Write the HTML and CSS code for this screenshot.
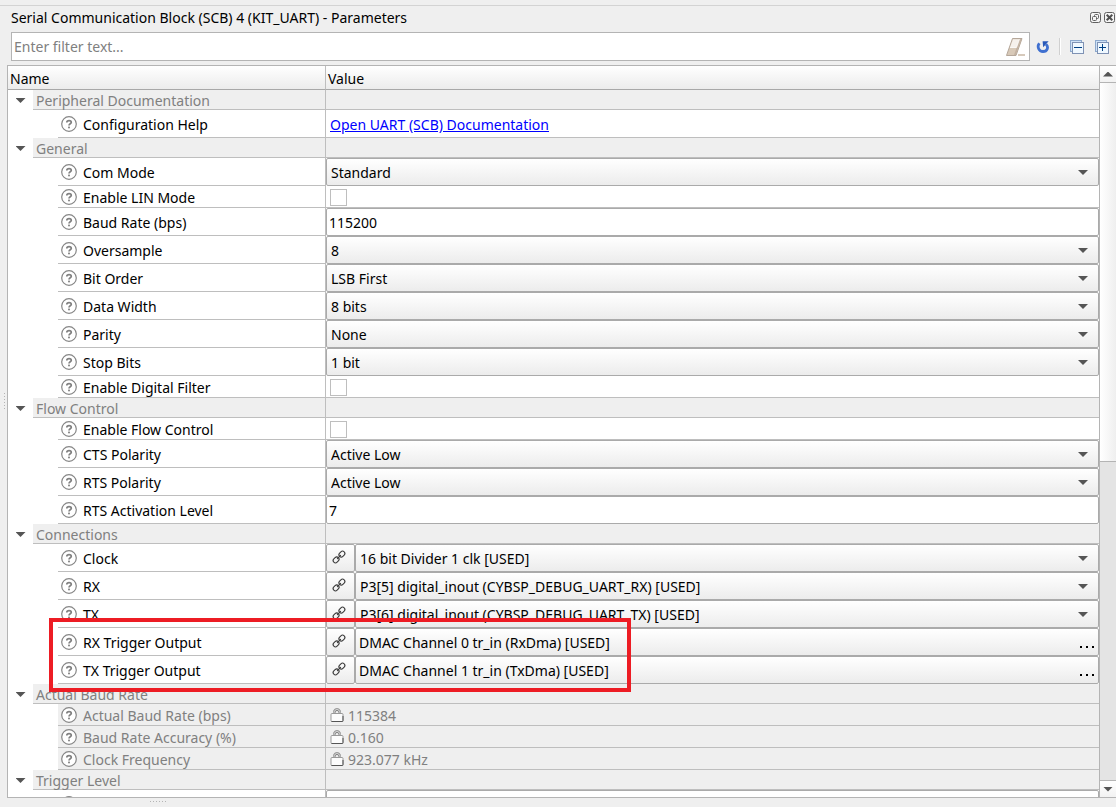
FILE: index.html
```
<!DOCTYPE html>
<html lang="en">
<head>
<meta charset="utf-8">
<title>Serial Communication Block (SCB) 4 (KIT_UART) - Parameters</title>
<link rel="stylesheet" href="styles.css">
</head>
<body>
<svg class="sprite" aria-hidden="true">
  <symbol id="i-help" viewBox="0 0 16 16"><circle cx="8" cy="8" r="7.3" fill="#fff" stroke="#868686" stroke-width="1.2"/><path d="M5.8 6.4C5.8 4 10.4 4 10.3 6.4C10.2 7.8 8 7.8 8 9.6" fill="none" stroke="#808080" stroke-width="1.7"/><rect x="7.1" y="10.6" width="1.8" height="1.7" fill="#808080"/></symbol>
  <symbol id="i-link" viewBox="0 0 14 14"><g fill="none" stroke="#3a3a3a" stroke-width="1.1" stroke-linecap="round"><rect x="-3.2" y="-2.3" width="6.4" height="4.6" rx="2.3" transform="translate(9.9 4.1) rotate(-45)"/><rect x="-3.2" y="-2.3" width="6.4" height="4.6" rx="2.3" transform="translate(4.1 9.9) rotate(-45)"/><path d="M5.4 8.6L8.6 5.4"/></g></symbol>
  <symbol id="i-lock" viewBox="0 0 14 14"><path d="M3.5 6V4Q3.5 .6 7 .6T10.5 4V6" fill="none" stroke="#b0b0b0"/><path d="M5 6V4Q5 2.5 7 2.5T9 4V6" fill="none" stroke="#777"/><path d="M3.5 3.5Q4 .6 7 .6T10.5 3.5" fill="none" stroke="#999"/><rect x="1" y="5.5" width="12" height="8" rx="1" fill="#fcfcfc" stroke="#999"/><path d="M1.5 13.5H12.5Q13 13.5 13 12.5V8" fill="none" stroke="#555"/></symbol>
</svg>

<header class="title-bar">
  <h1 class="title">Serial Communication Block (SCB) 4 (KIT_UART) - Parameters</h1>
  <button class="dock-button" aria-label="Float panel"><svg viewBox="0 0 11 11" width="11" height="11"><rect x=".5" y=".5" width="10" height="10" rx="2" fill="#f4f4f4" stroke="#606060"/><rect x="4.5" y="2.5" width="4" height="4" rx="1" fill="none" stroke="#606060"/><rect x="2.5" y="4.5" width="4" height="4" rx="1" fill="#f4f4f4" stroke="#606060"/></svg></button>
  <button class="dock-button" aria-label="Close panel"><svg viewBox="0 0 11 11" width="11" height="11"><rect x=".5" y=".5" width="10" height="10" rx="2" fill="#f4f4f4" stroke="#606060"/><path d="M2.7 2.7L8.3 8.3M8.3 2.7L2.7 8.3" stroke="#505050" stroke-width="2"/></svg></button>
</header>

<div class="toolbar">
  <div class="filter">
    <input class="filter-input" type="text" placeholder="Enter filter text..." aria-label="Filter">
    <button class="tool" aria-label="Clear filter"><svg viewBox="0 0 20 20" width="20" height="20"><path d="M7.5 1.5H17L11 18.5H1.5Z" fill="#d8c9b8" stroke="#b5a79a"/><path d="M8 2.2H14.5L11.5 10.5H5Z" fill="#f6f1ec"/><path d="M14.5 2.2H16.4L10.8 18H9Z" fill="#c3b2a2"/><path d="M5 10.5H11.5L14.5 2.2" fill="none" stroke="#fff" stroke-width=".8"/><path d="M13 18H20" stroke="#c4b29e" stroke-width="1.4"/></svg></button>
  </div>
  <button class="tool" aria-label="Reset"><svg viewBox="0 0 14 14" width="14" height="14"><path d="M3.3 3.2C.8 6.8 2.8 11.5 7 11.5C11.4 11.5 12.9 7 10 4.2" fill="none" stroke="#3f70d0" stroke-width="2.8"/><path d="M6.6 1.2H12.6L7.2 7.2Z" fill="#2858b8"/></svg></button>
  <span class="separator"></span>
  <button class="tool" aria-label="Collapse all"><svg viewBox="0 0 14 14" width="14" height="14"><rect x=".5" y=".5" width="11" height="11" fill="#cfe2f6" stroke="#8da9cd"/><rect x="2.5" y="2.5" width="11" height="11" fill="#eff8ff" stroke="#7f92b4"/><path d="M4 7.5H12" stroke="#004084"/></svg></button>
  <button class="tool" aria-label="Expand all"><svg viewBox="0 0 14 14" width="14" height="14"><rect x=".5" y=".5" width="11" height="11" fill="#cfe2f6" stroke="#8da9cd"/><rect x="2.5" y="2.5" width="11" height="11" fill="#eff8ff" stroke="#7f92b4"/><path d="M4 7.5H11M7.5 4V11" stroke="#004084"/></svg></button>
</div>

<main class="workspace">
  <div class="grip grip-side"></div>
  <div class="panel">
    <div class="tree">
      <table class="grid">
        <colgroup><col class="col-name"><col></colgroup>
        <thead><tr><th>Name</th><th>Value</th></tr></thead>
        <tbody>
          <tr class="group"><td><div class="branch"><button class="toggle" aria-label="Toggle Peripheral Documentation"></button><span class="name">Peripheral Documentation</span></div></td><td></td></tr>
          <tr class="tall"><td><div class="item"><svg class="help"><use href="#i-help"/></svg><span>Configuration Help</span></div></td><td class="lined"><a class="doc" href="#docs">Open UART (SCB) Documentation</a></td></tr>

          <tr class="group"><td><div class="branch"><button class="toggle" aria-label="Toggle General"></button><span class="name">General</span></div></td><td></td></tr>
          <tr class="tall"><td><div class="item"><svg class="help"><use href="#i-help"/></svg><label for="com">Com Mode</label></div></td><td><div class="field drop"><select id="com"><option>Standard</option></select></div></td></tr>
          <tr class="short"><td><div class="item"><svg class="help"><use href="#i-help"/></svg><label for="lin">Enable LIN Mode</label></div></td><td class="lined"><input id="lin" class="check" type="checkbox"></td></tr>
          <tr class="tall"><td><div class="item"><svg class="help"><use href="#i-help"/></svg><label for="baud">Baud Rate (bps)</label></div></td><td><div class="field"><input id="baud" class="text" type="text" value="115200"></div></td></tr>
          <tr class="tall"><td><div class="item"><svg class="help"><use href="#i-help"/></svg><label for="over">Oversample</label></div></td><td><div class="field drop"><select id="over"><option>8</option></select></div></td></tr>
          <tr class="tall"><td><div class="item"><svg class="help"><use href="#i-help"/></svg><label for="order">Bit Order</label></div></td><td><div class="field drop"><select id="order"><option>LSB First</option></select></div></td></tr>
          <tr class="tall"><td><div class="item"><svg class="help"><use href="#i-help"/></svg><label for="width">Data Width</label></div></td><td><div class="field drop"><select id="width"><option>8 bits</option></select></div></td></tr>
          <tr class="tall"><td><div class="item"><svg class="help"><use href="#i-help"/></svg><label for="parity">Parity</label></div></td><td><div class="field drop"><select id="parity"><option>None</option></select></div></td></tr>
          <tr class="tall"><td><div class="item"><svg class="help"><use href="#i-help"/></svg><label for="stop">Stop Bits</label></div></td><td><div class="field drop"><select id="stop"><option>1 bit</option></select></div></td></tr>
          <tr class="short"><td><div class="item"><svg class="help"><use href="#i-help"/></svg><label for="digital">Enable Digital Filter</label></div></td><td class="lined"><input id="digital" class="check" type="checkbox"></td></tr>

          <tr class="group"><td><div class="branch"><button class="toggle" aria-label="Toggle Flow Control"></button><span class="name">Flow Control</span></div></td><td></td></tr>
          <tr class="short"><td><div class="item"><svg class="help"><use href="#i-help"/></svg><label for="flow">Enable Flow Control</label></div></td><td class="lined"><input id="flow" class="check" type="checkbox"></td></tr>
          <tr class="tall"><td><div class="item"><svg class="help"><use href="#i-help"/></svg><label for="cts">CTS Polarity</label></div></td><td><div class="field drop"><select id="cts"><option>Active Low</option></select></div></td></tr>
          <tr class="tall"><td><div class="item"><svg class="help"><use href="#i-help"/></svg><label for="rts">RTS Polarity</label></div></td><td><div class="field drop"><select id="rts"><option>Active Low</option></select></div></td></tr>
          <tr class="tall"><td><div class="item"><svg class="help"><use href="#i-help"/></svg><label for="level">RTS Activation Level</label></div></td><td><div class="field"><input id="level" class="text" type="text" value="7"></div></td></tr>

          <tr class="group"><td><div class="branch"><button class="toggle" aria-label="Toggle Connections"></button><span class="name">Connections</span></div></td><td></td></tr>
          <tr class="tall"><td><div class="item"><svg class="help"><use href="#i-help"/></svg><label for="clock">Clock</label></div></td><td><div class="linked"><button class="jump" aria-label="Go to Clock"><svg class="chain"><use href="#i-link"/></svg></button><div class="field drop"><select id="clock"><option>16 bit Divider 1 clk [USED]</option></select></div></div></td></tr>
          <tr class="tall"><td><div class="item"><svg class="help"><use href="#i-help"/></svg><label for="rx">RX</label></div></td><td><div class="linked"><button class="jump" aria-label="Go to RX"><svg class="chain"><use href="#i-link"/></svg></button><div class="field drop"><select id="rx"><option>P3[5] digital_inout (CYBSP_DEBUG_UART_RX) [USED]</option></select></div></div></td></tr>
          <tr class="tall"><td><div class="item"><svg class="help"><use href="#i-help"/></svg><label for="tx">TX</label></div></td><td><div class="linked"><button class="jump" aria-label="Go to TX"><svg class="chain"><use href="#i-link"/></svg></button><div class="field drop"><select id="tx"><option>P3[6] digital_inout (CYBSP_DEBUG_UART_TX) [USED]</option></select></div></div></td></tr>
          <tr class="tall"><td><div class="item"><svg class="help"><use href="#i-help"/></svg><label for="rxt">RX Trigger Output</label></div></td><td><div class="linked"><button class="jump" aria-label="Go to RX Trigger Output"><svg class="chain"><use href="#i-link"/></svg></button><button id="rxt" class="picker"><span>DMAC Channel 0 tr_in (RxDma) [USED]</span><span class="dots"><i></i><i></i><i></i></span></button></div></td></tr>
          <tr class="tall"><td><div class="item"><svg class="help"><use href="#i-help"/></svg><label for="txt">TX Trigger Output</label></div></td><td><div class="linked"><button class="jump" aria-label="Go to TX Trigger Output"><svg class="chain"><use href="#i-link"/></svg></button><button id="txt" class="picker"><span>DMAC Channel 1 tr_in (TxDma) [USED]</span><span class="dots"><i></i><i></i><i></i></span></button></div></td></tr>

          <tr class="group"><td><div class="branch"><button class="toggle" aria-label="Toggle Actual Baud Rate"></button><span class="name">Actual Baud Rate</span></div></td><td></td></tr>
          <tr class="short readonly"><td><div class="item"><svg class="help"><use href="#i-help"/></svg><span>Actual Baud Rate (bps)</span></div></td><td class="lined"><div class="locked"><svg class="lock"><use href="#i-lock"/></svg><span>115384</span></div></td></tr>
          <tr class="short readonly"><td><div class="item"><svg class="help"><use href="#i-help"/></svg><span>Baud Rate Accuracy (%)</span></div></td><td class="lined"><div class="locked"><svg class="lock"><use href="#i-lock"/></svg><span>0.160</span></div></td></tr>
          <tr class="short readonly"><td><div class="item"><svg class="help"><use href="#i-help"/></svg><span>Clock Frequency</span></div></td><td class="lined"><div class="locked"><svg class="lock"><use href="#i-lock"/></svg><span>923.077 kHz</span></div></td></tr>

          <tr class="group"><td><div class="branch"><button class="toggle" aria-label="Toggle Trigger Level"></button><span class="name">Trigger Level</span></div></td><td></td></tr>
          <tr class="tall"><td><div class="item"><svg class="help"><use href="#i-help"/></svg></div></td><td><div class="field"><input class="text" type="text" aria-label="Level"></div></td></tr>
        </tbody>
      </table>
      <div class="highlight"></div>
    </div>
    <div class="scrollbar">
      <button class="step" aria-label="Scroll up"><span class="up"></span></button>
      <div class="thumb"></div>
      <div class="track"></div>
      <button class="step step-down" aria-label="Scroll down"><span class="down"></span></button>
    </div>
  </div>
</main>
<footer class="bottom"><div class="grip grip-bottom"></div></footer>
</body>
</html>
```
FILE: styles.css
```
* { box-sizing: border-box; }

body {
  margin: 0;
  height: 100vh;
  display: flex;
  flex-direction: column;
  overflow: hidden;
  background: #efefef;
  color: #000;
  font: 14px/20px "Noto Sans", "Open Sans", sans-serif;
}

button, input, select { font: inherit; color: inherit; margin: 0; }
button { padding: 0; border: 0; background: none; }
.sprite { position: absolute; width: 0; height: 0; }

.title-bar {
  display: flex;
  align-items: center;
  gap: 3px;
  height: 27px;
  margin-top: 5px;
  padding: 0 1px 2px 11px;
  border-top: 1px solid #d3d3d3;
}
.title { flex: 1; margin: 0; font-size: 14px; line-height: 20px; font-weight: 400; }
.dock-button { display: flex; padding-bottom: 2px; }

.toolbar {
  display: flex;
  align-items: center;
  height: 29px;
  margin-bottom: 4px;
  padding: 0 7px 0 11px;
  gap: 11px;
}
.filter {
  flex: 1;
  display: flex;
  align-items: center;
  height: 29px;
  margin-right: -5px;
  padding: 0 4px 0 2px;
  border: 1px solid #b4b4b4;
  background: #fff;
}
.filter-input { flex: 1; min-width: 0; padding: 0; border: 0; outline: 0; background: none; }
.filter-input::placeholder { color: #808080; opacity: 1; }
.tool { display: flex; }
.separator { width: 2px; height: 17px; margin: 0 -2px; border-left: 1px solid #d0d0d0; background: #fff; }

.workspace { flex: 1; min-height: 0; display: flex; }
.grip-side {
  align-self: center;
  width: 7px;
  height: 17px;
  margin-top: -60px;
  background: repeating-linear-gradient(#b4b4b4 0 1px, transparent 1px 3px) 4px 0 / 1px 100% no-repeat;
}
.panel {
  flex: 1;
  min-width: 0;
  display: flex;
  border: 1px solid #b4b4b4;
  border-right: 0;
  background: #fff;
}
.tree { position: relative; flex: 1; min-width: 0; overflow: hidden; }

.grid { width: 100%; table-layout: fixed; border-collapse: separate; border-spacing: 0; }
.col-name { width: 318px; }
.grid th {
  height: 24px;
  padding: 2px 2px 0;
  border-bottom: 1px solid #a8a8a8;
  background: linear-gradient(#fff, #ececec);
  text-align: left;
  font-weight: 400;
  line-height: 20px;
}
.grid td { padding: 0; vertical-align: top; }
.grid tr > :first-child { border-right: 1px solid #bebebe; }
.group td:last-child { background: #efefef; border-bottom: 1px solid #bebebe; }
.grid .lined { border-bottom: 1px solid #bebebe; }
.tall td { height: 28px; vertical-align: middle; }
.short td { height: 22px; vertical-align: middle; }
.group td { height: 20px; }

.branch { display: flex; height: 20px; color: #808080; }
.toggle { width: 25px; display: flex; justify-content: center; padding-top: 8px; }
.toggle::before, .drop::after, .down, .up {
  content: "";
  width: 10px;
  height: 5px;
  background: #555;
  clip-path: polygon(0 0, 100% 0, 50% 100%);
}
.up { clip-path: polygon(50% 0, 100% 100%, 0 100%); }
.name { flex: 1; height: 20px; padding: 0 3px; border-bottom: 1px solid #bebebe; background: #efefef; line-height: 22px; }

.item {
  display: flex;
  align-items: center;
  gap: 6px;
  height: 28px;
  margin-left: 50px;
  padding: 2px 0 0 3px;
  border-bottom: 1px solid #bebebe;
}
.short .item { height: 22px; }
.help { width: 16px; height: 16px; flex: none; margin-bottom: 2px; }
.readonly { color: #808080; }
.readonly .item, .readonly .lined { background: #efefef; }

.doc { display: block; padding: 2px 4px 0; color: #0000ff; }
.check {
  appearance: none;
  display: block;
  width: 17px;
  height: 17px;
  margin: 1px 0 0 4px;
  border: 1px solid #bebebe;
  background: #fff;
}
.field { position: relative; flex: 1; min-width: 0; height: 28px; }
.text, .drop select, .jump, .picker {
  display: block;
  width: 100%;
  height: 28px;
  border: 1px solid #aaa;
  border-radius: 2px;
  outline: 0;
}
.text { padding: 1px 3px 0 2px; background: #fff; }
.drop select { appearance: none; padding: 1px 24px 0 4px; background: linear-gradient(#fff, #ececec); }
.drop::after { position: absolute; right: 11px; top: 12px; pointer-events: none; }
.linked { display: flex; }
.linked .jump { flex: none; width: 29px; padding: 0 0 2px 5px; background: linear-gradient(#fff, #ececec); }
.chain { display: block; width: 14px; height: 14px; }
.picker {
  flex: 1;
  display: flex;
  align-items: center;
  justify-content: space-between;
  padding: 1px 4px 0 3px;
  background: linear-gradient(#fff, #ececec);
}
.dots { display: flex; gap: 4px; padding-top: 8px; }
.dots i { width: 2px; height: 2px; background: #000; }
.locked { display: flex; align-items: center; gap: 4px; height: 21px; padding: 2px 4px 0; }
.lock { width: 14px; height: 14px; margin-bottom: 1px; }

/* Annotation frame over the two trigger rows */
.highlight { position: absolute; left: 41px; top: 552px; width: 582px; height: 74px; border: 4px solid #ed1c24; }

.scrollbar { display: flex; flex-direction: column; width: 17px; border-left: 1px solid #b4b4b4; }
.step { display: flex; align-items: center; justify-content: center; height: 17px; border-bottom: 1px solid #b4b4b4; background: linear-gradient(#fff, #f2f2f2); }
.step-down { border-top: 1px solid #b4b4b4; border-bottom: 0; }
.thumb { flex: 379; border-bottom: 1px solid #b4b4b4; background: linear-gradient(90deg, #fff, #efefef); }
.track { flex: 318; background: #e4e4e4; }

.bottom { display: flex; height: 9px; padding: 3px 0 0 150px; }
.grip-bottom { width: 17px; height: 1px; background: repeating-linear-gradient(90deg, #b4b4b4 0 1px, transparent 1px 3px); }
```
